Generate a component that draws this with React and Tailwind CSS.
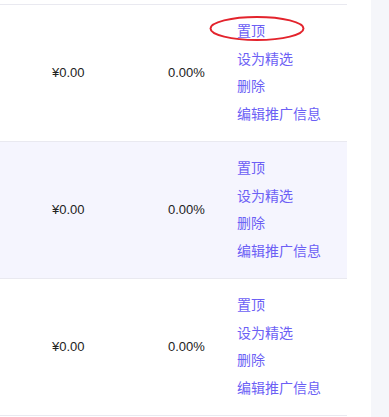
import React from 'react';

const rows = [
  { price: '¥0.00', rate: '0.00%', shaded: false },
  { price: '¥0.00', rate: '0.00%', shaded: true },
  { price: '¥0.00', rate: '0.00%', shaded: false },
];

const actions = ['置顶', '设为精选', '删除', '编辑推广信息'];

function Row({ row, marked }) {
  return (
    <div
      className={`relative flex items-center h-[137px] border-b border-[#e9e9f0] ${
        row.shaded ? 'bg-[#f5f5fe]' : 'bg-white'
      }`}
    >
      <div className="w-[168px] pl-[52px] text-[13px] text-[#222]">{row.price}</div>
      <div className="w-[69px] text-[13px] text-[#222]">{row.rate}</div>
      <div className="flex flex-col text-[14px] leading-[27.5px] text-[#6c5ff5]">
        {actions.map((a) => (
          <a key={a} className="cursor-pointer">{a}</a>
        ))}
      </div>
      {marked && (
        <svg className="absolute left-[208px] top-[10px]" width="98" height="27" viewBox="0 0 98 27">
          <ellipse cx="49" cy="13.5" rx="46.5" ry="11.5" fill="none" stroke="#e3232c" strokeWidth="2" />
        </svg>
      )}
    </div>
  );
}

export default function App() {
  return (
    <div
      className="flex w-[389px] h-[417px] bg-white overflow-hidden"
      style={{ fontFamily: '"Liberation Sans", "Noto Sans CJK SC", sans-serif' }}
    >
      <div className="w-[347px]">
        <div className="h-[5px] border-b border-[#e9e9f0]" />
        {rows.map((r, i) => (
          <Row key={i} row={r} marked={i === 0} />
        ))}
      </div>
      <div className="w-[24px]" />
      <div className="flex-1 bg-[#f5f6fa]" />
    </div>
  );
}
